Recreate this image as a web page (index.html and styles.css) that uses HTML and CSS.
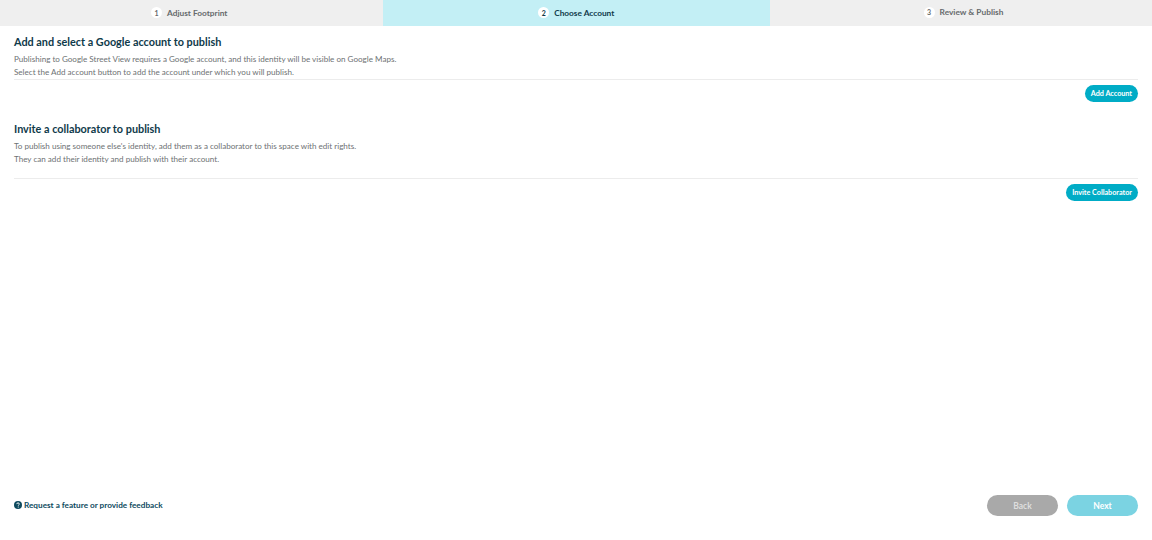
FILE: index.html
```html
<!DOCTYPE html>
<html lang="en">
<head>
<meta charset="utf-8">
<title>Publish</title>
<link rel="stylesheet" href="styles.css">
</head>
<body>
<div class="page">
  <nav class="steps">
    <div class="step first-step"><span class="num">1</span><span>Adjust Footprint</span></div>
    <div class="step active"><span class="num">2</span><span>Choose Account</span></div>
    <div class="step last"><span class="num">3</span><span>Review &amp; Publish</span></div>
  </nav>
  <main class="content">
    <section class="sec first">
      <h2>Add and select a Google account to publish</h2>
      <p>Publishing to Google Street View requires a Google account, and this identity will be visible on Google Maps.<br>Select the Add account button to add the account under which you will publish.</p>
      <div class="actions"><button class="pill">Add Account</button></div>
    </section>
    <section class="sec second">
      <h2>Invite a collaborator to publish</h2>
      <p>To publish using someone else's identity, add them as a collaborator to this space with edit rights.<br>They can add their identity and publish with their account.</p>
      <div class="actions"><button class="pill">Invite Collaborator</button></div>
    </section>
  </main>
  <footer class="foot">
    <a class="feedback" href="#">
      <svg class="help" viewBox="0 0 16 16" width="8" height="8"><circle cx="8" cy="8" r="8" fill="#0d4a5e"/><path d="M5.4 6.2C5.5 4.7 6.6 3.8 8.1 3.8c1.5 0 2.6.9 2.6 2.2 0 1-.6 1.5-1.3 2-.6.4-.8.7-.8 1.3v.3" fill="none" stroke="#fff" stroke-width="1.9"/><circle cx="8.5" cy="12" r="1.2" fill="#fff"/></svg>
      <span>Request a feature or provide feedback</span>
    </a>
    <div class="nav-btns">
      <button class="big back">Back</button>
      <button class="big next">Next</button>
    </div>
  </footer>
</div>
</body>
</html>
```

FILE: styles.css
```css
* { box-sizing: border-box; }
html, body { margin: 0; height: 100%; }
body { font-family: "Lato", "Open Sans", sans-serif; background: #fff; color: #6b6f72; }
.page { height: 540px; display: flex; flex-direction: column; overflow: hidden; }
.steps { display: grid; grid-template-columns: 382.5px 387.5px 382px; height: 26px; background: #efefef; }
.step { display: flex; align-items: center; justify-content: center; gap: 5px; font-size: 8.3px; font-weight: 700; color: #666a6c; padding-bottom: 1px; }
.step.first-step { padding-right: 4px; }
.step.active { background: #c3eff5; color: #0f3a4a; }
.step.last { padding-bottom: 2px; padding-left: 5px; }
.num { width: 11px; height: 11px; border-radius: 50%; background: #fff; display: flex; align-items: center; justify-content: center; font-size: 7px; }
.content { flex: 1; padding: 0 14px; }
.sec h2 { margin: 0; font-size: 10.85px; line-height: 16px; font-weight: 700; color: #0f3a4a; }
.sec p { margin: 0; font-size: 8.08px; line-height: 12.5px; color: #6e7274; }
.sec.first { padding-top: 8px; }
.sec.first h2 { margin-bottom: 3px; }
.sec.first p { padding-bottom: 1px; border-bottom: 1px solid #ececec; }
.sec.second { padding-top: 19px; }
.sec.second h2 { margin-bottom: 3px; }
.sec.second p { padding-bottom: 13px; border-bottom: 1px solid #ececec; }
.actions { display: flex; justify-content: flex-end; padding-top: 5px; }
.pill { height: 17px; padding: 0 6px; border: 0; border-radius: 9px; background: #00acc6; color: #fff; font: 700 7.2px "Lato", "Open Sans", sans-serif; }
.foot { display: flex; justify-content: space-between; align-items: center; padding: 0 14px 24px; }
.feedback { display: flex; align-items: center; gap: 2px; margin-bottom: 2px; font-size: 8.2px; font-weight: 700; color: #0d4a5e; text-decoration: none; }
.nav-btns { display: flex; gap: 9px; }
.big { width: 71px; height: 21px; border: 0; border-radius: 11px; color: #fff; font: 700 8.5px "Lato", "Open Sans", sans-serif; }
.back { background: #a9a9a9; color: #dedede; }
.next { background: #7bd3e2; }
```
